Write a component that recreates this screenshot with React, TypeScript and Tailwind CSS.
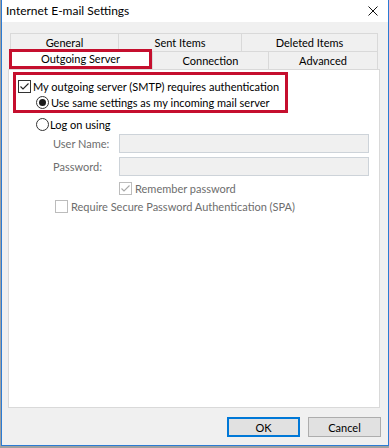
import React from 'react';

const CheckBox = ({ checked, disabled }: { checked?: boolean; disabled?: boolean }) => (
  <span
    className={`w-[13px] h-[13px] shrink-0 border bg-white flex items-center justify-center ${
      disabled ? 'border-[#bcbcbc]' : 'border-[#333333]'
    }`}
  >
    {checked && (
      <svg width="11" height="11" viewBox="0 0 11 11">
        <path d="M1.5 5.5 L4 8 L9.5 2.5" fill="none" stroke={disabled ? '#a8a8a8' : '#222222'} strokeWidth="1.1" />
      </svg>
    )}
  </span>
);

const Radio = ({ checked }: { checked?: boolean }) => (
  <span className="w-[13px] h-[13px] shrink-0 rounded-full border border-[#333333] bg-white flex items-center justify-center">
    {checked && <span className="w-[7px] h-[7px] rounded-full bg-[#1a1a1a]" />}
  </span>
);

export default function App() {
  return (
    <div className="w-[389px] h-[448px] bg-[#a0a0a0] overflow-hidden font-['Lato',sans-serif] text-[11px] text-black leading-none whitespace-nowrap">
      {/* Window */}
      <div className="ml-[1px] w-[388px] h-[446px] border-l border-r border-b border-[#2b7bd3] bg-[#f0f0f0] flex flex-col">
        {/* Title bar */}
        <div className="h-[22px] bg-white flex items-center justify-between pl-[4px] pr-[10px] text-[12px]">
          <span>Internet E-mail Settings</span>
          <svg width="10" height="10" viewBox="0 0 10 10">
            <path d="M0.5 0.5 L9.5 9.5 M9.5 0.5 L0.5 9.5" stroke="#111111" strokeWidth="1" />
          </svg>
        </div>

        {/* Body */}
        <div className="flex-1 pt-[11px]">
          <div className="ml-[6px]">
            {/* Tab row 1 */}
            <div className="flex ml-[2px] h-[18px]">
              <div className="w-[109px] pb-[1px] border border-b-0 border-[#d9d9d9] flex items-center justify-center">General</div>
              <div className="w-[124px] pb-[1px] -ml-px border border-b-0 border-[#d9d9d9] flex items-center justify-center">Sent Items</div>
              <div className="w-[137px] pb-[1px] -ml-px border border-b-0 border-[#d9d9d9] flex items-center justify-center">Deleted Items</div>
            </div>
            {/* Tab row 2 */}
            <div className="flex items-start h-[18px]">
              <div className="ml-[1px] -mt-[2px] w-[143px] h-[20px] pb-[2px] border-[3px] border-[#c50f2e] bg-white flex items-center justify-center">
                Outgoing Server
              </div>
              <div className="w-[117px] h-[18px] pb-[1px] border border-b-0 border-[#d9d9d9] flex items-center justify-center">Connection</div>
              <div className="w-[110px] h-[18px] pb-[1px] -ml-px border border-b-0 border-[#d9d9d9] flex items-center justify-center">Advanced</div>
            </div>

            {/* Panel */}
            <div className="w-[372px] h-[339px] border border-[#d9d9d9] bg-white">
              <div className="ml-[4px] mt-[2px] w-[275px] h-[41px] border-[3px] border-[#c50f2e] pt-[3px]">
                <div className="h-[16px] flex items-center pl-[2px] gap-[2px]">
                  <CheckBox checked />
                  <span>My outgoing server (SMTP) requires authentication</span>
                </div>
                <div className="h-[16px] flex items-center pl-[20px] gap-[2px]">
                  <Radio checked />
                  <span>Use same settings as my incoming mail server</span>
                </div>
              </div>

              <div className="mt-[3px] ml-[27px] h-[16px] flex items-center gap-[1px]">
                <Radio />
                <span>Log on using</span>
              </div>

              <div className="mt-[2px] ml-[44px] h-[19px] flex items-center">
                <span className="w-[66px] text-[#6d6d6d]">User Name:</span>
                <div className="w-[250px] h-[19px] border border-[#cdd3d9] bg-[#f0f0f0]" />
              </div>
              <div className="mt-[4px] ml-[44px] h-[19px] flex items-center">
                <span className="w-[66px] text-[#6d6d6d]">Password:</span>
                <div className="w-[250px] h-[19px] border border-[#cdd3d9] bg-[#f0f0f0]" />
              </div>

              <div className="mt-[4px] ml-[110px] h-[16px] flex items-center gap-[3px] text-[#6d6d6d]">
                <CheckBox checked disabled />
                <span>Remember password</span>
              </div>
              <div className="mt-[2px] ml-[46px] h-[16px] flex items-center gap-[3px] text-[#6d6d6d]">
                <CheckBox disabled />
                <span>Require Secure Password Authentication (SPA)</span>
              </div>
            </div>
          </div>

          {/* Buttons */}
          <div className="mt-[9px] flex justify-end gap-[8px] pr-[7px]">
            <button className="w-[73px] h-[20px] border-2 border-[#0078d7] bg-[#e1e1e1] flex items-center justify-center">OK</button>
            <button className="w-[73px] h-[20px] border border-[#adadad] bg-[#e1e1e1] flex items-center justify-center">Cancel</button>
          </div>
        </div>
      </div>
    </div>
  );
}
